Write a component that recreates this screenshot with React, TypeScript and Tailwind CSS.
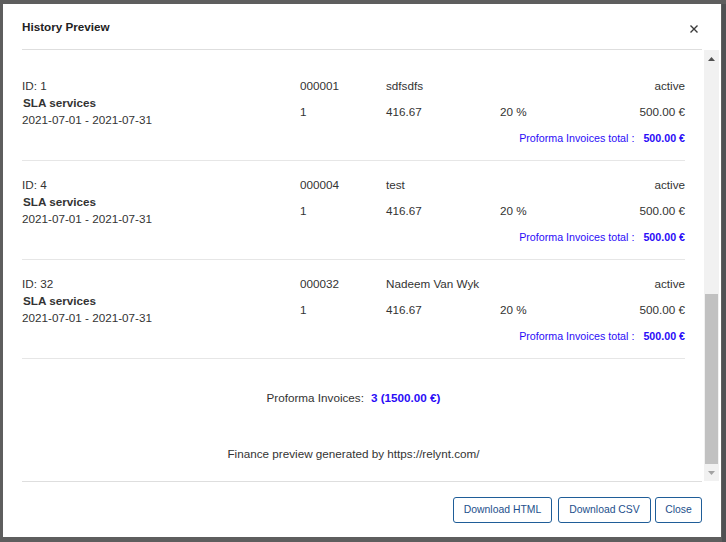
import React from "react";

type Invoice = {
  id: number;
  number: string;
  client: string;
  status: string;
  service: string;
  period: string;
  qty: string;
  net: string;
  vat: string;
  gross: string;
};

const invoices: Invoice[] = [
  { id: 1, number: "000001", client: "sdfsdfs", status: "active", service: "SLA services", period: "2021-07-01 - 2021-07-31", qty: "1", net: "416.67", vat: "20 %", gross: "500.00 €" },
  { id: 4, number: "000004", client: "test", status: "active", service: "SLA services", period: "2021-07-01 - 2021-07-31", qty: "1", net: "416.67", vat: "20 %", gross: "500.00 €" },
  { id: 32, number: "000032", client: "Nadeem Van Wyk", status: "active", service: "SLA services", period: "2021-07-01 - 2021-07-31", qty: "1", net: "416.67", vat: "20 %", gross: "500.00 €" },
];

const cols = "grid grid-cols-[278px_86px_114px_1fr_auto]";

function InvoiceRow({ inv }: { inv: Invoice }) {
  return (
    <div className="border-b border-[#e6e6e6] pt-[15px] pb-[13px]">
      <div className={`${cols} h-[17px] leading-[17px]`}>
        <span>ID: {inv.id}</span>
        <span>{inv.number}</span>
        <span>{inv.client}</span>
        <span />
        <span className="text-right">{inv.status}</span>
      </div>
      <div className={`${cols} items-center leading-[17px]`}>
        <div>
          <p className="pl-px font-bold">{inv.service}</p>
          <p>{inv.period}</p>
        </div>
        <span>{inv.qty}</span>
        <span>{inv.net}</span>
        <span>{inv.vat}</span>
        <span className="text-right">{inv.gross}</span>
      </div>
      <p className="mt-[2px] h-[17px] text-right text-[10.7px] leading-[17px] text-[#2a0cf7]">
        Proforma Invoices total :<span className="ml-[9px] font-bold">{inv.gross}</span>
      </p>
    </div>
  );
}

function Scrollbar() {
  return (
    <div className="flex w-[15px] flex-col bg-[#f1f1f1]">
      <div className="flex h-[17px] items-center justify-center">
        <svg width="7" height="4" viewBox="0 0 7 4">
          <path d="M0 4 L3.5 0 L7 4 Z" fill="#505050" />
        </svg>
      </div>
      <div className="flex flex-1 flex-col justify-end px-px">
        <div className="h-[170px] bg-[#c1c1c1]" />
      </div>
      <div className="flex h-[17px] items-center justify-center">
        <svg width="7" height="4" viewBox="0 0 7 4">
          <path d="M0 0 L3.5 4 L7 0 Z" fill="#a3a3a3" />
        </svg>
      </div>
    </div>
  );
}

export default function App() {
  return (
    <div className="flex h-[542px] w-[726px] overflow-hidden bg-[#5e5e5e] pt-[4px] pl-[3px] font-['Liberation_Sans',Arial,sans-serif] text-[11.7px] text-[#333]">
      <div className="flex h-[533px] w-[718px] flex-col bg-white">
        <header className="mx-[19px] flex h-[46px] items-center justify-between border-b border-[#dedede]">
          <h1 className="text-[11.7px] font-bold text-[#222]">History Preview</h1>
          <button className="mt-[5px] mr-[3px] flex h-[10px] w-[10px] items-center justify-center">
            <svg width="8" height="8" viewBox="0 0 8 8">
              <path d="M0.5 0.5 L7.5 7.5 M7.5 0.5 L0.5 7.5" stroke="#3a3a3a" strokeWidth="1.4" />
            </svg>
          </button>
        </header>

        <div className="flex h-[431px]">
          <div className="flex-1 overflow-hidden px-[19px] pt-[12px]">
            {invoices.map((inv) => (
              <InvoiceRow key={inv.id} inv={inv} />
            ))}
            <p className="mt-[30px] h-[17px] text-center leading-[17px]">
              Proforma Invoices:
              <span className="ml-[7px] font-bold text-[#2a0cf7]">3 (1500.00 €)</span>
            </p>
            <p className="mt-[39px] h-[17px] text-center leading-[17px]">
              Finance preview generated by https://relynt.com/
            </p>
          </div>
          <Scrollbar />
          <div className="w-[2px]" />
        </div>

        <footer className="mx-[19px] flex flex-1 items-start justify-end border-t border-[#dedede] pt-[15px]">
          <button className="mr-[6px] h-[26px] w-[99px] rounded-[3px] border border-[#1f5d98] text-[10.4px] text-[#1d4f8c]">
            Download HTML
          </button>
          <button className="mr-[4px] h-[26px] w-[93px] rounded-[3px] border border-[#1f5d98] text-[10.4px] text-[#1d4f8c]">
            Download CSV
          </button>
          <button className="h-[26px] w-[47px] rounded-[3px] border border-[#1f5d98] text-[10.4px] text-[#1d4f8c]">
            Close
          </button>
        </footer>
      </div>
      <div className="ml-[1px] h-full flex-1 bg-[#4f5153]" />
    </div>
  );
}
